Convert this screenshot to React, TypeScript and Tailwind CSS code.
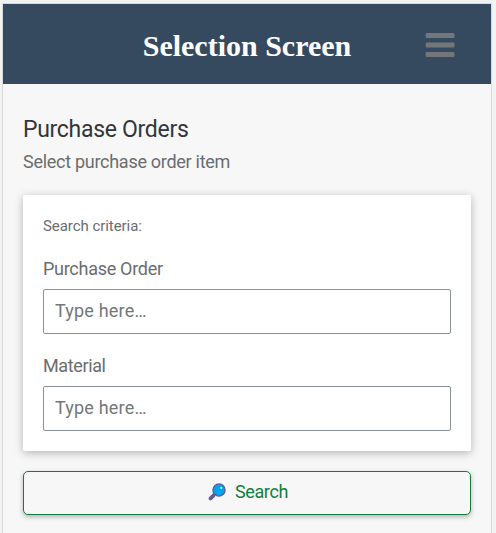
function Field({ label, labelClass }: { label: string; labelClass: string }) {
  return (
    <label className="block">
      <span className="block h-6 text-[18px] leading-6 text-[#6a6d70]">
        <span className={`whitespace-nowrap ${labelClass}`}>{label}</span>
      </span>
      <input
        type="text"
        placeholder="Type here…"
        className="mt-2 block h-[45px] w-full rounded-[2px] border border-[#89919a] bg-white px-[11px] pb-[2px] text-[18px] tracking-[0.2px] text-[#32363a] outline-none placeholder:text-[#74777a]"
      />
    </label>
  );
}

function MenuIcon() {
  return (
    <svg className="h-6 w-[30px]" viewBox="0 0 30 24" fill="#74777a" aria-hidden="true">
      <rect x="0.7" y="0" width="28.8" height="5" rx="1.3" />
      <rect x="0.7" y="9.5" width="28.8" height="5" rx="1.3" />
      <rect x="0.7" y="19" width="28.8" height="5" rx="1.3" />
    </svg>
  );
}

function SearchIcon() {
  return (
    <svg className="h-[18px] w-[18px]" viewBox="0 0 18 18" aria-hidden="true">
      <path d="M2.6 15.4 5.4 12.6" stroke="#635994" strokeWidth="3.8" strokeLinecap="round" />
      <path d="M5.5 12.5 8 10" stroke="#635994" strokeWidth="2" />
      <circle cx="11" cy="7" r="6.1" fill="#00a6ed" stroke="#635994" strokeWidth="1.3" />
      <circle cx="13.3" cy="4.8" r="1.1" fill="#e8f7ff" />
    </svg>
  );
}

export default function App() {
  return (
    <div className="h-[533px] w-[496px] overflow-hidden bg-[#f1f2f2] pl-[2px] pt-[3px] font-['Roboto',sans-serif]">
      <div className="h-[540px] w-[490px] border border-[#d9dada] bg-[#f7f7f7]">
        <header className="grid h-20 grid-cols-[1fr_auto_1fr] items-center bg-[#354a5f]">
          <h1 className="col-start-2 pt-[3px] font-['Liberation_Serif',serif] text-[30px] font-bold leading-none text-white">
            Selection Screen
          </h1>
          <button type="button" aria-label="Menu" className="mr-9 mt-[2px] justify-self-end">
            <MenuIcon />
          </button>
        </header>
        <main className="px-5 pt-8">
          <h2 className="text-[23px] leading-7 tracking-[-0.3px] text-[#32363a]">Purchase Orders</h2>
          <p className="mt-1.5 text-[18px] leading-6 tracking-[-0.28px] text-[#6a6d70]">Select purchase order item</p>
          <section className="mt-[21px] h-64 rounded-[2px] bg-white px-5 pt-5 shadow-[0_2px_8px_rgba(0,0,0,0.28)]">
            <p className="h-[22px] text-[15px] leading-[22px] tracking-[-0.06px] text-[#6a6d70]">Search criteria:</p>
            <div className="mt-5 flex flex-col gap-5">
              <Field label="Purchase Order" labelClass="tracking-[-0.28px]" />
              <Field label="Material" labelClass="tracking-[-0.38px]" />
            </div>
          </section>
          <button
            type="button"
            className="mt-5 flex h-11 w-full items-center justify-center gap-[9px] rounded-[5px] border border-[#107e3e] bg-[#f7f7f7] pb-[3px] pl-[2px] text-[18px] tracking-[-0.35px] text-[#107e3e] shadow-[0_2px_5px_rgba(0,0,0,0.28)]"
          >
            <SearchIcon />
            <span>Search</span>
          </button>
        </main>
      </div>
    </div>
  );
}
